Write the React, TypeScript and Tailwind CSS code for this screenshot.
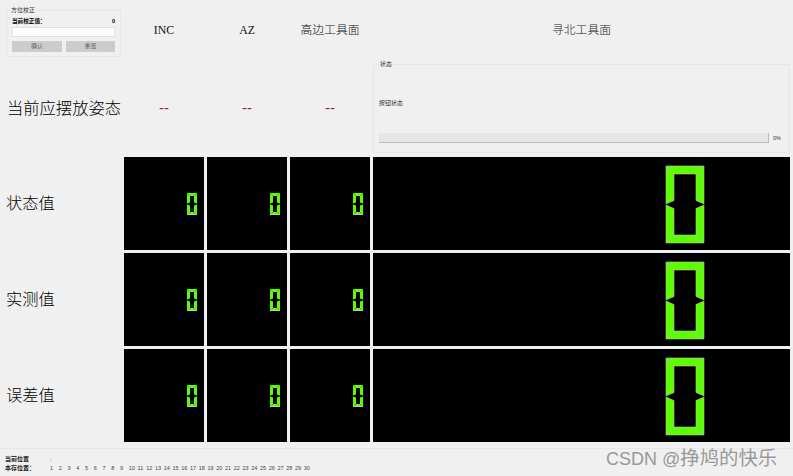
const sans = "font-['Liberation_Sans','Noto_Sans_CJK_SC',sans-serif]"
const serif = "font-['Liberation_Serif','Noto_Sans_CJK_SC',serif]"

const columns = ['INC', 'AZ', '高边工具面']
const rows = ['状态值', '实测值', '误差值']
const cells = [0, 1, 2, 3]
const positions = Array.from({ length: 30 }, (_, i) => i + 1)

// 七段数码管的 "0"，中间一段不亮
function Digit({ w, h, t, outline }: { w: number; h: number; t: number; outline?: boolean }) {
    const mid = h / 2
    const n = t / 2
    const segments = [
        `0,0 ${w},0 ${w - t},${t} ${t},${t}`,
        `0,${h} ${w},${h} ${w - t},${h - t} ${t},${h - t}`,
        `0,0 ${t},${t} ${t},${mid - n} 0,${mid - 0.5}`,
        `${w},0 ${w - t},${t} ${w - t},${mid - n} ${w},${mid - 0.5}`,
        `0,${h} ${t},${h - t} ${t},${mid + n} 0,${mid + 0.5}`,
        `${w},${h} ${w - t},${h - t} ${w - t},${mid + n} ${w},${mid + 0.5}`,
    ]
    return (
        <svg width={w} height={h} viewBox={`0 0 ${w} ${h}`} className="block overflow-visible">
            {segments.map((points) => (
                <polygon key={points} points={points} fill="#5cff00" stroke={outline ? '#bdbdbd' : 'none'} strokeWidth={0.6} />
            ))}
            {!outline && <line x1={0} y1={h - 0.5} x2={w} y2={h - 0.5} stroke="#c4c4c4" strokeWidth={1} />}
        </svg>
    )
}

function Lcd({ large }: { large?: boolean }) {
    return (
        <div className={`flex items-center justify-end bg-black ${large ? 'pr-[86px] pt-[1px]' : 'pr-[7px] pt-[1px]'}`}>
            {large ? <Digit w={38} h={77} t={8} outline /> : <Digit w={10} h={22} t={3} />}
        </div>
    )
}

export default function App() {
    return (
        <div className={`w-[793px] h-[476px] relative overflow-hidden bg-[#f0f0f0] text-black ${sans}`}>
            <div className="grid grid-cols-[121px_80px_80px_80px_417px] grid-rows-[60px_91px_93px_93px_93px] gap-[3px]">
                {/* 方位校正 */}
                <fieldset className="ml-[6px] mt-[7px] h-[50px] border border-[#e6e6e6] px-[5px]">
                    <legend className="-ml-[1px] text-[6px] leading-[7px] text-[#333]">方位校正</legend>
                    <div className="flex justify-between items-center mt-[3px] h-[8px] text-[5.6px] font-bold">
                        <span>当前校正值：</span>
                        <span>0</span>
                    </div>
                    <div className="h-[10px] mt-[2px] bg-white border border-[#e0e0e0]" />
                    <div className="flex gap-[4px] mt-[4px]">
                        <button className="w-[50px] h-[11px] bg-[#cccccc] text-[6px] leading-[11px] text-[#666]">确认</button>
                        <button className="w-[49px] h-[11px] bg-[#cccccc] text-[6px] leading-[11px] text-[#666]">重置</button>
                    </div>
                </fieldset>

                {columns.map((name) => (
                    <div key={name} className={`flex items-center justify-center pt-[2px] text-[11.8px] font-light text-[#111] ${serif}`}>{name}</div>
                ))}
                <div className={`flex items-center justify-center pt-[2px] text-[11.8px] font-light text-[#222] ${serif}`}>寻北工具面</div>

                {/* 当前应摆放姿态 */}
                <div className="flex items-center pl-[7px] pb-[1px] text-[16.3px] font-light whitespace-nowrap text-black">当前应摆放姿态</div>
                {columns.map((name) => (
                    <div key={name} className="flex items-center justify-center text-[15px] text-[#8b2a2a]">--</div>
                ))}
                <fieldset className="-mt-[2px] mb-[1px] border border-[#e6e6e6] px-[5px]">
                    <legend className="ml-[1px] text-[6px] leading-[7px] text-[#333]">状态</legend>
                    <div className="mt-[31px] h-[8px] text-[6px] leading-[8px] text-[#333]">按钮状态</div>
                    <div className="flex items-center mt-[26px]">
                        <div className="w-[390px] h-[10px] bg-[#e6e6e6] border-b border-r border-[#bcbcbc]" />
                        <span className="ml-[4px] text-[5.5px] text-[#333]">0%</span>
                    </div>
                </fieldset>

                {rows.map((label) => (
                    <div key={label} className="contents">
                        <div className="flex items-center pl-[6px] text-[16.3px] font-light text-black">{label}</div>
                        {cells.map((cell) => (
                            <Lcd key={cell} large={cell === 3} />
                        ))}
                    </div>
                ))}
            </div>

            <div className="mt-[6px] border-t border-[#e6e6e6] pl-[5px] pt-[6px] text-[6px] leading-[9px] text-[#222]">
                <div className="flex">
                    <span className="w-[45px] font-bold">当前位置</span>
                    <span>:</span>
                </div>
                <div className="flex">
                    <span className="w-[45px] font-bold">本存位置：</span>
                    <div className="flex">
                        {positions.map((n) => (
                            <span key={n} className="w-[8.75px] text-[5.5px] text-[#444]">{n}</span>
                        ))}
                    </div>
                </div>
            </div>

            <div className="absolute left-[606px] top-[447px] text-[18px] leading-[22px] whitespace-nowrap text-[#999999]">
                CSDN @<span className="text-[19.4px]">挣鸠的快乐</span>
            </div>
        </div>
    )
}
